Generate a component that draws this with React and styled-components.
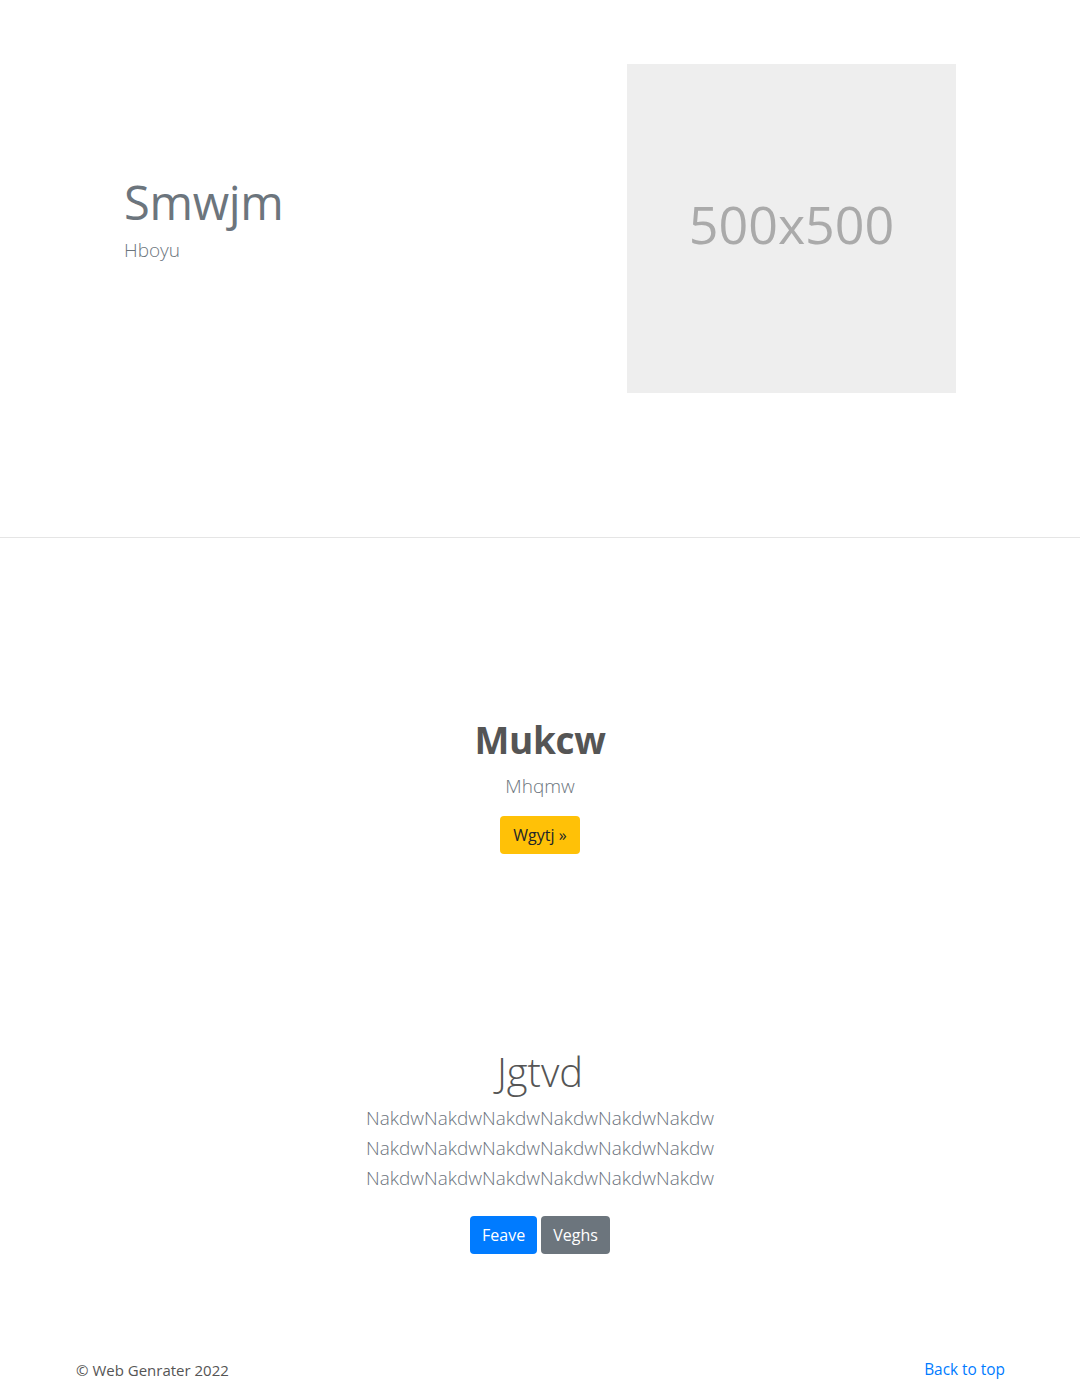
import React from "react";
import styled, { createGlobalStyle } from "styled-components";

const GlobalStyle = createGlobalStyle`
	body {
		margin: 0;
		background: #fff;
		font-family: "Open Sans", "Noto Sans", sans-serif;
		color: #212529;
	}
`;

const Hero = styled.section`
	padding: 64px 0 144px 0;
	border-bottom: 1px solid #e5e5e5;
`;

const HeroInner = styled.div`
	width: 960px;
	margin: 0 auto;
	padding: 0 64px;
	box-sizing: border-box;
	display: flex;
	align-items: center;
	justify-content: space-between;
`;

const HeroText = styled.div`
	margin-bottom: 18px;
`;

const HeroTitle = styled.h1`
	margin: 0 0 4px 0;
	font-size: 47px;
	font-weight: 400;
	line-height: 1.2;
	letter-spacing: -0.3px;
	color: #6c757d;
`;

const HeroSub = styled.p`
	margin: 0;
	font-size: 19px;
	font-weight: 300;
	line-height: 30px;
	color: #6c757d;
`;

const Placeholder = styled.div`
	width: 329px;
	height: 329px;
	background: #eeeeee;
	color: #aaaaaa;
	display: flex;
	align-items: center;
	justify-content: center;
	padding-bottom: 10px;
	box-sizing: border-box;

	span {
		font-size: 52px;
	}
`;

const Block = styled.section`
	padding-top: ${(p) => p.$top}px;
	text-align: center;
`;

const Heading = styled.h2`
	margin: 0 0 7px 0;
	font-size: ${(p) => (p.$light ? 40 : 37)}px;
	line-height: 48px;
	font-weight: ${(p) => (p.$light ? 300 : 700)};
	letter-spacing: ${(p) => (p.$light ? 0 : -0.4)}px;
	color: #555;
`;

const Lead = styled.p`
	margin: 0;
	font-size: 19px;
	font-weight: 300;
	line-height: 30px;
	color: #6c757d;
`;

const Buttons = styled.div`
	margin-top: ${(p) => p.$top}px;
	display: flex;
	justify-content: center;
	gap: 4px;
`;

const colors = {
	warning: ["#ffc107", "#212529"],
	primary: ["#007bff", "#fff"],
	secondary: ["#6c757d", "#fff"],
};

const Button = styled.a`
	display: inline-block;
	height: 38px;
	box-sizing: border-box;
	padding: 6px ${(p) => (p.$variant === "warning" ? 13 : 12)}px;
	font-size: 16px;
	line-height: 26px;
	border-radius: 4px;
	text-decoration: none;
	background: ${(p) => colors[p.$variant][0]};
	color: ${(p) => colors[p.$variant][1]};
	cursor: pointer;
`;

const Footer = styled.footer`
	width: 960px;
	margin: 103px auto 0 auto;
	padding: 0 15px 0 16px;
	box-sizing: border-box;
	display: flex;
	justify-content: space-between;
	font-size: 15px;
	line-height: 26px;
	color: #555;

	a {
		color: #007bff;
		text-decoration: none;
		font-size: 15.4px;
	}
`;

const line = "Nakdw".repeat(6);

export default function App() {
	return (
		<>
			<GlobalStyle />
			<Hero>
				<HeroInner>
					<HeroText>
						<HeroTitle>Smwjm</HeroTitle>
						<HeroSub>Hboyu</HeroSub>
					</HeroText>
					<Placeholder>
						<span>500x500</span>
					</Placeholder>
				</HeroInner>
			</Hero>
			<Block $top={178}>
				<Heading>Mukcw</Heading>
				<Lead>Mhqmw</Lead>
				<Buttons $top={15}>
					<Button $variant="warning">Wgytj »</Button>
				</Buttons>
			</Block>
			<Block $top={194}>
				<Heading $light>Jgtvd</Heading>
				<Lead>{line}</Lead>
				<Lead>{line}</Lead>
				<Lead>{line}</Lead>
				<Buttons $top={23}>
					<Button $variant="primary">Feave</Button>
					<Button $variant="secondary">Veghs</Button>
				</Buttons>
			</Block>
			<Footer>
				<span>© Web Genrater 2022</span>
				<a href="#">Back to top</a>
			</Footer>
		</>
	);
}
